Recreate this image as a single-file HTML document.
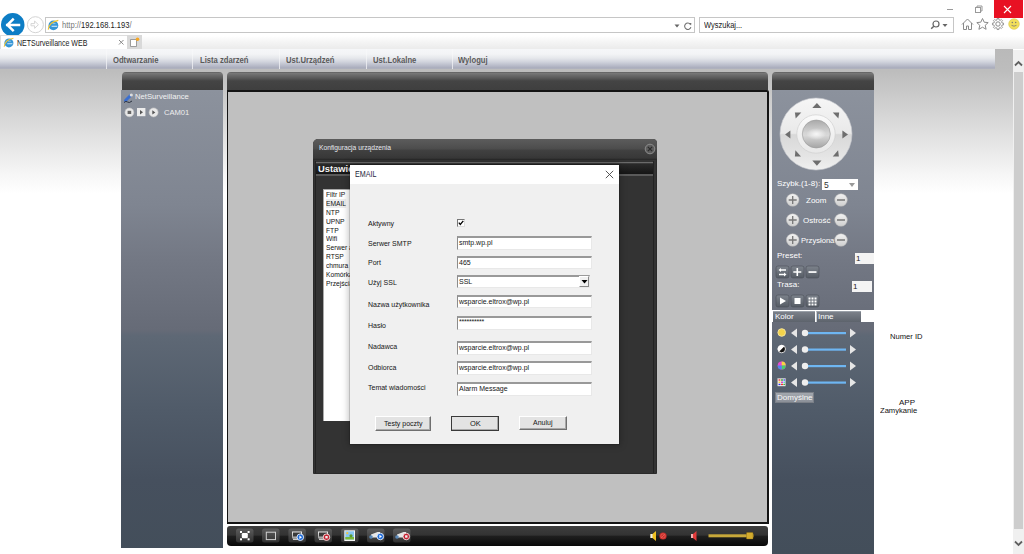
<!DOCTYPE html>
<html><head><meta charset="utf-8">
<style>
*{margin:0;padding:0;box-sizing:border-box}
html,body{width:1024px;height:554px;overflow:hidden;background:#fff;font-family:"Liberation Sans",sans-serif}
.a{position:absolute}
.t{position:absolute;white-space:nowrap;transform-origin:0 0}
/* chrome */
#chrome{left:0;top:0;width:1024px;height:34px;background:#fff}
#tabrow{left:0;top:33px;width:1024px;height:16px;background:linear-gradient(#fff 0px,#fff 3px,#f6f6f6 8px,#ececec 15px)}
#page{left:0;top:49px;width:1013px;height:504px;background:linear-gradient(#b9b9b9 0px,#bdbdbd 22px,#f6f6f6 125px,#ffffff 144px)}
#menubar{left:0;top:49px;width:995px;height:20px;background:linear-gradient(#f5f6f8 0px,#f3f4f6 5px,#e6e8ec 9px,#d0d3dc 13px,#b6b9c7 17px,#a9acbb 19px,#b4b6c0 20px)}
.sep{top:49px;width:1px;height:20px;background:linear-gradient(rgba(255,255,255,.25),rgba(255,255,255,.7))}
.mi{top:54px;font-size:9px;font-weight:bold;color:#5a5a5a;line-height:12px;transform:scaleX(.85)}
#sbar{left:1013px;top:50px;width:11px;height:504px;background:#f0f0f0}
#thumb{left:1014px;top:72px;width:9px;height:457px;background:#cdcdcd}
.ph{height:18px;border-radius:4px 4px 0 0;background:linear-gradient(#555 0px,#7a7a7a 1px,#6c6c6c 3px,#5a5a5a 6px,#444 9px,#3f3f3f 100%)}
.wt{color:#fff}
.pg{background-image:linear-gradient(#8c929d 0%,#7f8591 24.8%,#737884 36.6%,#666b77 51.7%,#5e6875 53%,#505b69 69%,#46505e 84%,#434e5a 100%);background-size:100% 464px;background-repeat:no-repeat}
.lb{font-size:7px;line-height:8px;color:#151515}
.inp{left:457px;width:135px;background:#fff;border:1px solid;border-top:2px solid #999;border-color:#999 #e8e8e8 #e8e8e8 #8c8c8c}
.it{left:459px;font-size:7px;line-height:8px;color:#151515}
.btn{background:#e3e3e3;border:1px solid;border-color:#fff #6f6f6f #6f6f6f #fff;box-shadow:inset -1px -1px 0 #a8a8a8}
</style></head><body>
<div id="chrome" class="a"></div>
<div id="tabrow" class="a"></div>

<!-- back/forward -->
<svg class="a" style="left:0;top:11px" width="44" height="24" viewBox="0 0 44 24">
 <circle cx="12.75" cy="13.75" r="11.75" fill="#0d7dc5"/>
 <path d="M7.2 13.9H19M12.8 8.6L7.4 13.9L12.8 19.2" stroke="#fff" stroke-width="2.5" fill="none" stroke-linejoin="miter" stroke-linecap="square"/>
 <circle cx="35.4" cy="13.7" r="8" fill="#fff" stroke="#d4d4d4" stroke-width="1"/>
 <path d="M31 12.6h3.6v-2.6l3.8 3.7-3.8 3.7v-2.6h-3.6z" fill="none" stroke="#d6d6d6" stroke-width="1"/>
</svg>
<!-- address bar -->
<div class="a" style="left:45px;top:17px;width:650px;height:16px;border:1px solid #c6c6c6;background:#fff"></div>
<svg class="a" style="left:47px;top:19px" width="13" height="13" viewBox="0 0 13 13">
 <circle cx="6.4" cy="6.4" r="4.9" fill="#3696d6"/>
 <path d="M4.6 7.3h5.6" stroke="#cfe6f6" stroke-width="1.1"/>
 <path d="M5.5 4.6h3" stroke="#a9d3f0" stroke-width=".8"/>
 <path d="M1.3 10.6Q1.8 3.2 11.3 1.4" stroke="#f3c431" stroke-width="1.2" fill="none"/>
</svg>
<div class="t" style="left:62px;top:19px;font-size:9.6px;line-height:12px;color:#777;transform:scaleX(.79)">http://<span style="color:#222">192.168.1.193</span>/</div>
<svg class="a" style="left:672px;top:20px" width="22" height="12" viewBox="0 0 22 12">
 <path d="M2.5 4.5h5l-2.5 3z" fill="#666"/>
 <path d="M18.4 4.3a3.2 3.2 0 1 0 0.5 2.9" stroke="#707070" stroke-width="1.1" fill="none"/>
 <path d="M16.8 3l2.6 0.1-0.3 2.5z" fill="#707070"/>
</svg>
<!-- search -->
<div class="a" style="left:699px;top:17px;width:255px;height:16px;border:1px solid #c6c6c6;background:#fff"></div>
<div class="t" style="left:704px;top:19px;font-size:9.6px;line-height:12px;color:#222;transform:scaleX(.78)">Wyszukaj...</div>
<svg class="a" style="left:929px;top:19px" width="22" height="12" viewBox="0 0 22 12">
 <circle cx="7" cy="5" r="3" stroke="#666" stroke-width="1.2" fill="none"/>
 <path d="M4.8 7.2L2.2 9.8" stroke="#666" stroke-width="1.5"/>
 <path d="M13.5 5h5l-2.5 3z" fill="#666"/>
</svg>
<!-- toolbar icons -->
<svg class="a" style="left:960px;top:17px" width="62" height="14" viewBox="0 0 62 14">
 <path d="M2 7.5L7.5 2 13 7.5M3.5 6v6.5h3v-3.5h2v3.5h3V6" stroke="#8a8a8a" stroke-width="1" fill="none"/>
 <path d="M22.5 1.5l1.7 3.7 4 .4-3 2.7.9 4-3.6-2.1-3.6 2.1.9-4-3-2.7 4-.4z" stroke="#8a8a8a" stroke-width="1" fill="none"/>
 <circle cx="38" cy="7" r="2.2" stroke="#8a8a8a" stroke-width="1" fill="none"/>
 <path d="M43.53 6.12 L43.53 7.88 L42.08 7.98 L41.58 9.19 L42.53 10.29 L41.29 11.53 L40.19 10.58 L38.98 11.08 L38.88 12.53 L37.12 12.53 L37.02 11.08 L35.81 10.58 L34.71 11.53 L33.47 10.29 L34.42 9.19 L33.92 7.98 L32.47 7.88 L32.47 6.12 L33.92 6.02 L34.42 4.81 L33.47 3.71 L34.71 2.47 L35.81 3.42 L37.02 2.92 L37.12 1.47 L38.88 1.47 L38.98 2.92 L40.19 3.42 L41.29 2.47 L42.53 3.71 L41.58 4.81 L42.08 6.02Z" stroke="#8a8a8a" stroke-width=".9" fill="none" stroke-linejoin="round"/>
 <circle cx="54" cy="7" r="5.3" fill="#f2df5b" stroke="#d8c648" stroke-width=".6"/>
 <circle cx="52.3" cy="5.5" r=".7" fill="#777"/><circle cx="55.7" cy="5.5" r=".7" fill="#777"/>
 <path d="M51.5 8.3q2.5 1.8 5 0" stroke="#777" stroke-width=".8" fill="none"/>
</svg>
<!-- window controls -->
<div class="a" style="left:947px;top:9px;width:6px;height:1px;background:#9a9a9a"></div>
<svg class="a" style="left:974px;top:5px" width="9" height="8" viewBox="0 0 9 8">
 <rect x="1.5" y="2.5" width="5" height="5" fill="none" stroke="#999" stroke-width="1"/>
 <path d="M3 2.5V1H8v5H6.5" fill="none" stroke="#999" stroke-width="1"/>
</svg>
<div class="a" style="left:994px;top:0;width:29px;height:18px;background:#e81123"></div>
<svg class="a" style="left:1003px;top:5px" width="9" height="9" viewBox="0 0 9 9"><path d="M1 1L8 8M8 1L1 8" stroke="#fff" stroke-width="1.1"/></svg>

<!-- tab -->
<div class="a" style="left:0;top:35px;width:127px;height:14px;background:#fff;border-top:1px solid #dedede;border-left:1px solid #dedede"></div>
<svg class="a" style="left:3px;top:37px" width="12" height="12" viewBox="0 0 13 13">
 <circle cx="6.4" cy="6.4" r="4.9" fill="#3696d6"/>
 <path d="M4.6 7.3h5.6" stroke="#cfe6f6" stroke-width="1.1"/>
 <path d="M5.5 4.6h3" stroke="#a9d3f0" stroke-width=".8"/>
 <path d="M1.3 10.6Q1.8 3.2 11.3 1.4" stroke="#f3c431" stroke-width="1.2" fill="none"/>
</svg>
<div class="t" style="left:17px;top:37.5px;font-size:8.4px;line-height:10px;color:#1a1a1a;transform:scaleX(.84)">NETSurveillance WEB</div>
<svg class="a" style="left:117px;top:38px" width="8" height="8" viewBox="0 0 8 8"><path d="M2 2L6.5 6.5M6.5 2L2 6.5" stroke="#8a8a8a" stroke-width="1"/></svg>
<div class="a" style="left:127px;top:35px;width:15px;height:14px;background:#d9d9d9"></div>
<svg class="a" style="left:129px;top:37px" width="12" height="11" viewBox="0 0 12 11">
 <path d="M1.5 2.5h6v7h-6z" fill="#fff" stroke="#888" stroke-width=".8"/>
 <circle cx="8.5" cy="2.3" r="1.8" fill="#f5a623"/>
</svg>

<div id="page" class="a"></div>
<div id="menubar" class="a"></div>
<div class="a sep" style="left:106px"></div>
<div class="a sep" style="left:192px"></div>
<div class="a sep" style="left:279px"></div>
<div class="a sep" style="left:366px"></div>
<div class="a sep" style="left:452px"></div>
<div class="t mi" style="left:113px">Odtwarzanie</div>
<div class="t mi" style="left:200px">Lista zdarzeń</div>
<div class="t mi" style="left:286px">Ust.Urządzeń</div>
<div class="t mi" style="left:373px">Ust.Lokalne</div>
<div class="t mi" style="left:458px">Wyloguj</div>
<div id="sbar" class="a"></div>
<div id="thumb" class="a"></div>

<!-- scrollbar arrows -->
<svg class="a" style="left:1014px;top:60px" width="9" height="7" viewBox="0 0 9 7"><path d="M1 5.5L4.5 2 8 5.5" stroke="#606060" stroke-width="1.8" fill="none"/></svg>
<svg class="a" style="left:1014px;top:540px" width="9" height="7" viewBox="0 0 9 7"><path d="M1 1.5L4.5 5 8 1.5" stroke="#606060" stroke-width="1.8" fill="none"/></svg>

<!-- left panel -->
<div class="a ph" style="left:122px;top:72px;width:101px"></div>
<div class="a pg" style="left:121px;top:90px;width:102px;height:458px;background-position:0 0"></div>
<svg class="a" style="left:123px;top:93px" width="11" height="11" viewBox="0 0 11 11">
 <path d="M2.5 7.5L7.5 2.5" stroke="#3b6fd0" stroke-width="3" stroke-linecap="round"/>
 <circle cx="8.3" cy="2" r="1.6" fill="#ddd"/>
 <path d="M1 9.5q2-2 3.5-.5t4.5-1" stroke="#2a3240" stroke-width="1" fill="none"/>
</svg>
<div class="t wt" style="left:135px;top:93px;font-size:7.7px;line-height:8px;color:#f2f2f2">NetSurveillance</div>
<svg class="a" style="left:124px;top:107px" width="36" height="11" viewBox="0 0 36 11">
 <circle cx="5.4" cy="5.4" r="4.4" fill="#e8e8e8" stroke="#c8c8c8" stroke-width=".6"/>
 <rect x="3.6" y="3.8" width="3.6" height="3.2" fill="#666"/>
 <rect x="13" y="1" width="8.4" height="8.2" fill="#ececec"/>
 <path d="M16 3v4.4l3-2.2z" fill="#555"/>
 <circle cx="29.6" cy="5.4" r="4.5" fill="#e8e8e8" stroke="#c8c8c8" stroke-width=".6"/>
 <path d="M28.3 3.2v4.4l3-2.2z" fill="#555"/>
</svg>
<div class="t" style="left:164px;top:109px;font-size:7.6px;line-height:8px;color:#eee">CAM01</div>

<!-- middle -->
<div class="a ph" style="left:227px;top:72px;width:541px"></div>
<div class="a" style="left:227px;top:90px;width:542px;height:434px;background:#c0c0c0;border:2px solid #141414;border-left-width:1px;border-top-width:2px;border-radius:0 2px 0 0"></div>
<div class="a" style="left:227px;top:526px;width:541px;height:20px;border-radius:3px 3px 4px 4px;background:linear-gradient(#3e3e3e 0%,#333 45%,#1e1e1e 52%,#080808 100%)"></div>
<svg class="a" style="left:230px;top:524px" width="190" height="24" viewBox="0 0 190 24">
 <defs><linearGradient id="bg1" x1="0" y1="0" x2="0" y2="1"><stop offset="0" stop-color="#5c5c5c"/><stop offset=".5" stop-color="#484848"/><stop offset="1" stop-color="#303030"/></linearGradient>
 <linearGradient id="mon" x1="0" y1="0" x2="0" y2="1"><stop offset="0" stop-color="#f0f0f0"/><stop offset="1" stop-color="#9a9a9a"/></linearGradient></defs>
 <g fill="url(#bg1)">
 <rect x="6" y="4.4" width="17.5" height="14.2" rx="2.5"/>
 <rect x="32" y="4.4" width="17.5" height="14.2" rx="2.5"/>
 <rect x="58.4" y="4.4" width="17.5" height="14.2" rx="2.5"/>
 <rect x="84.5" y="4.4" width="17.5" height="14.2" rx="2.5"/>
 <rect x="111" y="4.4" width="17.5" height="14.2" rx="2.5"/>
 <rect x="137" y="4.4" width="17.5" height="14.2" rx="2.5"/>
 <rect x="163" y="4.4" width="17.5" height="14.2" rx="2.5"/>
 </g>
 <!-- 1 fullscreen -->
 <rect x="11.8" y="9" width="6" height="5.3" rx="1.2" fill="#fff"/>
 <g fill="#fff"><rect x="10" y="7" width="2" height="2"/><rect x="17.6" y="7" width="2" height="2"/><rect x="10" y="14.3" width="2" height="2"/><rect x="17.6" y="14.3" width="2" height="2"/></g>
 <!-- 2 single -->
 <rect x="36.3" y="8.2" width="9.2" height="7.4" fill="none" stroke="#d0d0d0" stroke-width="1"/>
 <!-- 3 monitor play -->
 <rect x="62" y="7.5" width="10" height="7" fill="url(#mon)"/>
 <rect x="63" y="8.5" width="8" height="4" fill="#3a3a3a"/>
 <rect x="63" y="14.5" width="6" height="1.5" fill="#ccc"/>
 <circle cx="70.3" cy="13.2" r="3.3" fill="#1d6ad8" stroke="#e8f0ff" stroke-width=".9"/>
 <path d="M69.4 11.5v3.4l2.6-1.7z" fill="#fff"/>
 <!-- 4 monitor rec -->
 <rect x="88" y="7.5" width="10" height="7" fill="url(#mon)"/>
 <rect x="89" y="8.5" width="8" height="4" fill="#3a3a3a"/>
 <rect x="89" y="14.5" width="6" height="1.5" fill="#ccc"/>
 <circle cx="96.5" cy="13.2" r="3.3" fill="#c42030" stroke="#f4e0e0" stroke-width=".9"/>
 <rect x="95.3" y="12" width="2.4" height="2.4" fill="#f0f0f0"/>
 <!-- 5 picture -->
 <rect x="114.3" y="6.3" width="10.7" height="10.7" fill="#f4f4f4"/>
 <rect x="115.3" y="7.3" width="8.7" height="8.2" fill="#86c6f2"/>
 <path d="M115.3 13h8.7v2.5h-8.7z" fill="#7ab83a"/>
 <circle cx="121" cy="11.8" r="1.6" fill="#5c9a30"/>
 <circle cx="117.3" cy="9.2" r="1.1" fill="#f5c542"/>
 <!-- 6 cam play -->
 <path d="M141 10.5l6.5-2.5h2.5v5.5h-6.5l-2.5 .5z" fill="#e6e6e6"/>
 <circle cx="141" cy="13" r="1.8" fill="#5a88b8"/>
 <circle cx="150.3" cy="12.5" r="3.3" fill="#1d6ad8" stroke="#e8f0ff" stroke-width=".9"/>
 <path d="M149.4 10.8v3.4l2.6-1.7z" fill="#fff"/>
 <!-- 7 cam rec -->
 <path d="M167 10.5l6.5-2.5h2.5v5.5h-6.5l-2.5 .5z" fill="#e6e6e6"/>
 <circle cx="167" cy="13" r="1.8" fill="#5a88b8"/>
 <circle cx="176.3" cy="12.5" r="3.3" fill="#c42030" stroke="#f4e0e0" stroke-width=".9"/>
 <rect x="175.1" y="11.3" width="2.4" height="2.4" fill="#f0f0f0"/>
</svg>
<svg class="a" style="left:648px;top:529px" width="110" height="14" viewBox="0 0 110 14">
 <path d="M2.5 5h2l3.5-3v10l-3.5-3h-2z" fill="#f0c020"/>
 <rect x="2.5" y="5" width="2" height="4" fill="#eee"/>
 <circle cx="15" cy="7" r="3.6" fill="#c92a2a"/>
 <circle cx="15" cy="7" r="2.2" fill="none" stroke="#e86a5a" stroke-width=".7"/>
 <path d="M13.3 8.7l3.4-3.4" stroke="#e86a5a" stroke-width=".8"/>
 <path d="M43 5h2l3.5-3v10l-3.5-3h-2z" fill="#e23a3a"/>
 <rect x="43" y="5" width="2" height="4" fill="#f4b0b0"/>
 <rect x="60.5" y="5.3" width="45" height="3" fill="#c8a83a"/>
 <rect x="98.5" y="3.5" width="6.5" height="6.5" rx=".6" fill="#d4ac2e" stroke="#8a6d10" stroke-width=".4"/>
</svg>

<!-- right panel -->
<div class="a ph" style="left:772px;top:72px;width:102px"></div>
<div class="a pg" style="left:772px;top:90px;width:102px;height:220px;background-position:0 0"></div>
<div class="a pg" style="left:772px;top:322px;width:102px;height:232px;background-position:0 -232px"></div>

<!-- PTZ -->
<svg class="a" style="left:776px;top:92px" width="82" height="84" viewBox="0 0 82 84">
 <defs>
  <linearGradient id="ring" x1="0" y1="0" x2="0" y2="1"><stop offset="0" stop-color="#f6f6f6"/><stop offset=".49" stop-color="#e9e9e9"/><stop offset=".51" stop-color="#d8d8d8"/><stop offset=".8" stop-color="#e4e4e4"/><stop offset="1" stop-color="#f0f0f0"/></linearGradient>
  <linearGradient id="ring2" x1="0" y1="0" x2="0" y2="1"><stop offset="0" stop-color="#fafafa"/><stop offset="1" stop-color="#e8e8e8"/></linearGradient>
  <linearGradient id="knob" x1="0" y1="0" x2="0" y2="1"><stop offset="0" stop-color="#a9a9a9"/><stop offset=".45" stop-color="#d4d4d4"/><stop offset=".55" stop-color="#d8d8d8"/><stop offset="1" stop-color="#a4a4a4"/></linearGradient>
  <radialGradient id="kh" cx=".5" cy=".5" r=".5"><stop offset="0" stop-color="#fff" stop-opacity=".8"/><stop offset="1" stop-color="#fff" stop-opacity="0"/></radialGradient>
 </defs>
 <circle cx="40" cy="42" r="36" fill="url(#ring)" stroke="#c9cbd0" stroke-width=".6"/>
 <circle cx="40" cy="42" r="19.2" fill="url(#ring2)" stroke="#d0d0d0" stroke-width=".7"/>
 <circle cx="40.3" cy="42" r="14" fill="url(#knob)" stroke="#9a9a9a" stroke-width=".6"/>
 <ellipse cx="40.3" cy="42" rx="10" ry="6" fill="url(#kh)"/>
 <g fill="#6e6e6e">
  <path d="M40.9 10.9l4.6 5h-9.2z"/>
  <path d="M40.9 73.8l4.6-5.3h-9.2z"/>
  <path d="M9.1 42.4l5.3-4v8z"/>
  <path d="M72 42.4l-5.6-4v8z"/>
  <path d="M18.9 20.5h6.4l-5.6 6z"/>
  <path d="M56.8 20.5h6.4l-.8 6z"/>
  <path d="M19.4 58.3l-.5 6.1h6.1z"/>
  <path d="M62.1 58.3l.8 6.1h-6.1z"/>
 </g>
</svg>
<div class="t" style="left:777px;top:179px;font-size:8px;line-height:9px;color:#fff">Szybk.(1-8):</div>
<div class="a" style="left:822px;top:179px;width:36px;height:11px;background:#fff"></div>
<div class="t" style="left:824px;top:180px;font-size:8.5px;line-height:10px;color:#333">5</div>
<svg class="a" style="left:848px;top:182px" width="8" height="6" viewBox="0 0 8 6"><path d="M1 1h6l-3 4z" fill="#999"/></svg>
<svg class="a" style="left:785px;top:192px" width="64" height="56" viewBox="0 0 64 56">
 <defs><linearGradient id="pb" x1="0" y1="0" x2="0" y2="1"><stop offset="0" stop-color="#f2f2f2"/><stop offset="1" stop-color="#cfcfcf"/></linearGradient></defs>
 <g stroke="#b5b5b5" stroke-width=".5" fill="url(#pb)">
  <circle cx="7.7" cy="8" r="6.3"/><circle cx="56" cy="8" r="6.3"/>
  <circle cx="7.7" cy="28" r="6.3"/><circle cx="56" cy="28" r="6.3"/>
  <circle cx="7.7" cy="48" r="6.3"/><circle cx="56" cy="48" r="6.3"/>
 </g>
 <g stroke="#777" stroke-width="1.3">
  <path d="M3.7 8h8M7.7 4v8M52 8h8"/>
  <path d="M3.7 28h8M7.7 24v8M52 28h8"/>
  <path d="M3.7 48h8M7.7 44v8M52 48h8"/>
 </g>
</svg>
<div class="t" style="left:806px;top:196px;font-size:8px;line-height:9px;color:#fff">Zoom</div>
<div class="t" style="left:803px;top:216px;font-size:8px;line-height:9px;color:#fff">Ostrość</div>
<div class="t" style="left:801px;top:236px;font-size:7.6px;line-height:9px;color:#fff">Przysłona</div>
<div class="t" style="left:777px;top:251px;font-size:8px;line-height:9px;color:#fff">Preset:</div>
<div class="a" style="left:855px;top:253px;width:19px;height:11px;background:#f4f4f4"></div>
<div class="t" style="left:856px;top:254px;font-size:8px;line-height:9px;color:#222">1</div>
<div class="t" style="left:777px;top:280px;font-size:8px;line-height:9px;color:#fff">Trasa:</div>
<div class="a" style="left:852px;top:281px;width:20px;height:11px;background:#f4f4f4"></div>
<div class="t" style="left:853px;top:282px;font-size:8px;line-height:9px;color:#222">1</div>
<svg class="a" style="left:775px;top:265px" width="48" height="44" viewBox="0 0 48 44">
 <defs><linearGradient id="sq" x1="0" y1="0" x2="0" y2="1"><stop offset="0" stop-color="#7d838c"/><stop offset="1" stop-color="#565c65"/></linearGradient></defs>
 <g fill="url(#sq)" stroke="#4a4f57" stroke-width=".6">
  <rect x="1" y="1" width="13" height="12" rx="2"/><rect x="16" y="1" width="13" height="12" rx="2"/><rect x="31" y="1" width="13" height="12" rx="2"/>
  <rect x="1" y="30" width="13" height="12" rx="2"/><rect x="16" y="30" width="13" height="12" rx="2"/><rect x="31" y="30" width="13" height="12" rx="2"/>
 </g>
 <g fill="#fff">
  <path d="M3.5 5l2.5-2v1.3h5v1.4h-5V7z"/><path d="M11.5 9.5l-2.5-2v1.3h-5v1.4h5V11.5z"/>
  <path d="M21.5 3h1.6v3.2h3.2v1.6h-3.2V11h-1.6V7.8h-3.2V6.2h3.2z"/>
  <rect x="33.5" y="6.2" width="8" height="1.7"/>
  <path d="M5 32.5v7l6-3.5z"/>
  <rect x="19.5" y="33" width="6" height="6"/>
  <g><rect x="33.5" y="32.5" width="2" height="2"/><rect x="36.5" y="32.5" width="2" height="2"/><rect x="39.5" y="32.5" width="2" height="2"/>
  <rect x="33.5" y="35.5" width="2" height="2"/><rect x="36.5" y="35.5" width="2" height="2"/><rect x="39.5" y="35.5" width="2" height="2"/>
  <rect x="33.5" y="38.5" width="2" height="2"/><rect x="36.5" y="38.5" width="2" height="2"/><rect x="39.5" y="38.5" width="2" height="2"/></g>
 </g>
</svg>
<!-- tabs -->
<div class="a" style="left:773px;top:310px;width:101px;height:12px;background:#fff"></div>
<div class="a" style="left:773px;top:311px;width:42px;height:11px;background:linear-gradient(#7b8089,#5d636c);border-top:1px solid #9aa0a8"></div>
<div class="a" style="left:816px;top:311px;width:45px;height:11px;background:linear-gradient(#7b8089,#5d636c);border-top:1px solid #9aa0a8;border-left:1px solid #c8ccd2"></div>
<div class="t" style="left:775px;top:312px;font-size:8px;line-height:9px;color:#fff">Kolor</div>
<div class="t" style="left:818px;top:312px;font-size:8px;line-height:9px;color:#fff">Inne</div>
<!-- sliders -->
<svg class="a" style="left:774px;top:324px" width="90" height="66" viewBox="0 0 90 66">
 <g fill="#e6e6e6">
  <path d="M17 9l6-4.5v9z"/><path d="M82 9l-6-4.5v9z"/>
  <path d="M17 25.5l6-4.5v9z"/><path d="M82 25.5l-6-4.5v9z"/>
  <path d="M17 42l6-4.5v9z"/><path d="M82 42l-6-4.5v9z"/>
  <path d="M17 58.5l6-4.5v9z"/><path d="M82 58.5l-6-4.5v9z"/>
 </g>
 <g fill="#6eb6f2">
  <rect x="31" y="8" width="41" height="2.2"/><rect x="31" y="24.5" width="41" height="2.2"/>
  <rect x="31" y="41" width="41" height="2.2"/><rect x="31" y="57.5" width="41" height="2.2"/>
 </g>
 <g fill="#eee">
  <circle cx="31" cy="9" r="3.2"/><circle cx="31" cy="25.5" r="3.2"/><circle cx="31" cy="42" r="3.2"/><circle cx="31" cy="58.5" r="3.2"/>
 </g>
 <circle cx="7.7" cy="8.5" r="3.8" fill="#f3d34a" stroke="#f6e59a" stroke-width="1"/>
 <circle cx="7.7" cy="25" r="3.8" fill="#111" stroke="#ddd" stroke-width="1"/>
 <path d="M5 27.8L10.4 22.3A3.8 3.8 0 0 0 5 27.8z" fill="#fff"/>
 <circle cx="7.7" cy="41.5" r="4" fill="#e84ad0"/>
 <path d="M7.7 41.5L7.7 37.5A4 4 0 0 1 11.7 41.5z" fill="#f5d742"/>
 <path d="M7.7 41.5L11.7 41.5A4 4 0 0 1 7.7 45.5z" fill="#4ad06a"/>
 <path d="M7.7 41.5L7.7 45.5A4 4 0 0 1 3.7 41.5z" fill="#4a8af0"/>
 <rect x="3.8" y="54.5" width="7.5" height="7.5" fill="#fafafa" stroke="#ccc" stroke-width=".5"/>
 <g><rect x="4.5" y="55.3" width="2" height="1.4" fill="#e33"/><rect x="7" y="55.3" width="2" height="1.4" fill="#3a3"/><rect x="9.4" y="55.3" width="1.5" height="1.4" fill="#33e"/>
 <rect x="4.5" y="57.5" width="2" height="1.4" fill="#ec3"/><rect x="7" y="57.5" width="2" height="1.4" fill="#c3c"/><rect x="9.4" y="57.5" width="1.5" height="1.4" fill="#3cc"/>
 <rect x="4.5" y="59.7" width="2" height="1.4" fill="#33e"/><rect x="7" y="59.7" width="2" height="1.4" fill="#e33"/><rect x="9.4" y="59.7" width="1.5" height="1.4" fill="#3a3"/></g>
</svg>
<div class="a" style="left:775px;top:392px;width:39px;height:11px;background:linear-gradient(#a2a7ae,#8c9199);border:1px solid #7a7f87"></div>
<div class="t" style="left:777px;top:393px;font-size:8px;line-height:9px;color:#f8f8f8">Domyślne</div>

<!-- right text -->
<div class="t" style="left:890px;top:332px;font-size:8px;line-height:9px;color:#111;transform:scaleX(.95)">Numer ID</div>
<div class="t" style="left:899px;top:398px;font-size:8px;line-height:9px;color:#111">APP</div>
<div class="t" style="left:880px;top:406px;font-size:8px;line-height:9px;color:#111;transform:scaleX(.95)">Zamykanie</div>

<!-- config dialog -->
<div class="a" style="left:313px;top:139px;width:344px;height:335px;background:#333;border-radius:5px 4px 0 0;border:1px solid #2a2a2a"></div>
<div class="a" style="left:313px;top:139px;width:344px;height:21px;border-radius:5px 4px 0 0;background:linear-gradient(#5c5c5c 0%,#4d4d4d 45%,#404040 55%,#383838 90%,#262626 100%)"></div>
<div class="t" style="left:319px;top:144px;font-size:7.3px;line-height:8px;color:#e8eaf0;transform:scaleX(.92)">Konfiguracja urządzenia</div>
<svg class="a" style="left:644px;top:143px" width="12" height="12" viewBox="0 0 12 12">
 <circle cx="6" cy="6" r="4.8" fill="#5e5e5e" stroke="#8c8c8c" stroke-width="1"/>
 <path d="M3.9 3.9L8.1 8.1M8.1 3.9L3.9 8.1" stroke="#2c2c2c" stroke-width="1.3"/>
</svg>
<div class="a" style="left:315px;top:161px;width:339px;height:312px;border-left:1px solid #222;border-right:1px solid #222"></div>
<div class="a" style="left:316px;top:162px;width:337px;height:1px;background:#6a6a6a"></div><div class="a" style="left:316px;top:163px;width:337px;height:1px;background:#3a3a3a"></div>
<div class="a" style="left:316px;top:164px;width:337px;height:10px;background:linear-gradient(#2a2a2a,#151515)"></div>
<div class="a" style="left:316px;top:174px;width:337px;height:2px;background:#5a5a5a"></div>
<div class="t" style="left:318px;top:163px;font-size:9.4px;line-height:11px;font-weight:bold;color:#f4f4f4">Ustawienia</div>
<!-- list -->
<div class="a" style="left:323px;top:189px;width:40px;height:232px;background:#fff;border-left:1px solid #aaa;border-top:1px solid #aaa"></div>
<div class="t" style="left:326px;top:191px;font-size:7.6px;line-height:8.88px;color:#111;transform:scaleX(.88)">Filtr IP<br><span style="background:#eee">EMAIL</span><br>NTP<br>UPNP<br>FTP<br>Wifi<br>Serwer aplikacji<br>RTSP<br>chmura<br>Komórka<br>Przejścia</div>

<!-- email dialog -->
<div class="a" style="left:350px;top:165px;width:269px;height:279px;background:#f0f0f0;box-shadow:0 0 0 1px rgba(0,0,0,.12),0 0 7px 1px rgba(0,0,0,.28)"></div>
<div class="a" style="left:350px;top:165px;width:269px;height:19px;background:#fff"></div>
<div class="t" style="left:355px;top:170px;font-size:8.7px;line-height:9px;color:#1e1e3c;transform:scaleX(.82)">EMAIL</div>
<svg class="a" style="left:605px;top:170px" width="9" height="9" viewBox="0 0 9 9"><path d="M.8 .8L8.2 8.2M8.2 .8L.8 8.2" stroke="#444" stroke-width=".9"/></svg>

<div class="t lb" style="left:368px;top:220px">Aktywny</div>
<div class="t lb" style="left:368px;top:240px">Serwer SMTP</div>
<div class="t lb" style="left:368px;top:259px">Port</div>
<div class="t lb" style="left:368px;top:279px">Użyj SSL</div>
<div class="t lb" style="left:368px;top:301px">Nazwa użytkownika</div>
<div class="t lb" style="left:368px;top:322px">Hasło</div>
<div class="t lb" style="left:368px;top:343px">Nadawca</div>
<div class="t lb" style="left:368px;top:364px">Odbiorca</div>
<div class="t lb" style="left:368px;top:384px">Temat wiadomości</div>

<div class="a" style="left:457px;top:219px;width:8px;height:8px;background:#fff;border:1px solid;border-color:#777 #ddd #ddd #777"></div>
<svg class="a" style="left:457px;top:219px" width="8" height="8" viewBox="0 0 8 8"><path d="M1.8 3.6l1.5 1.8 3-3.6" stroke="#000" stroke-width="1.3" fill="none"/></svg>

<div class="a inp" style="top:236px;height:14px"></div>
<div class="a inp" style="top:256px;height:13px"></div>
<div class="a inp" style="top:275px;height:13px;width:133px"></div>
<div class="a" style="left:579px;top:276px;width:10px;height:11px;background:#f0f0f0;border:1px solid;border-color:#fff #888 #888 #fff"></div>
<svg class="a" style="left:581px;top:279px" width="7" height="5" viewBox="0 0 7 5"><path d="M0.5 1h6l-3 3.5z" fill="#000"/></svg>
<div class="a inp" style="top:295px;height:13px"></div>
<div class="a inp" style="top:316px;height:14px"></div>
<div class="a inp" style="top:341px;height:14px"></div>
<div class="a inp" style="top:361px;height:14px"></div>
<div class="a inp" style="top:382px;height:14px"></div>

<div class="t it" style="top:239px">smtp.wp.pl</div>
<div class="t it" style="top:259px">465</div>
<div class="t it" style="top:278px">SSL</div>
<div class="t it" style="top:298px">wsparcie.eltrox@wp.pl</div>
<div class="t it" style="top:318px;letter-spacing:-.22px">**********</div>
<div class="t it" style="top:344px">wsparcie.eltrox@wp.pl</div>
<div class="t it" style="top:364px">wsparcie.eltrox@wp.pl</div>
<div class="t it" style="top:385px">Alarm Message</div>

<div class="a btn" style="left:375px;top:416px;width:56px;height:15px"></div>
<div class="a btn" style="left:451px;top:416px;width:48px;height:15px;outline:1px solid #3a3a3a;outline-offset:-1px"></div>
<div class="a btn" style="left:519px;top:416px;width:48px;height:14px"></div>
<div class="t lb" style="left:384px;top:420px">Testy poczty</div>
<div class="t lb" style="left:470px;top:420px;font-size:7.5px">OK</div>
<div class="t lb" style="left:533px;top:419px">Anuluj</div>

</body></html>
